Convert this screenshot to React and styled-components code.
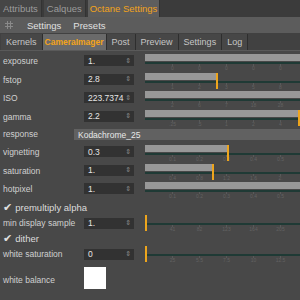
import React from 'react';
import styled, { createGlobalStyle } from 'styled-components';

const GlobalStyle = createGlobalStyle`
body {
    margin: 0;
    background: #484848;
    font-family: "Liberation Sans", Arial, sans-serif;
}
`;

const Frame = styled.div`
width: 300px;
height: 300px;
overflow: hidden;
background: #484848;
color: #d2d2d2;
font-size: 9px;
`;

const TopTabs = styled.div`
display: flex;
height: 17px;
background: #3b3b3b;
`;

const TopTab = styled.div`
display: flex;
align-items: center;
padding: 0 ${p => (p.active ? '2px' : '3px')};
margin-right: 2px;
background: ${p => (p.active ? '#5e5e5e' : '#464646')};
color: ${p => (p.active ? '#f2a31c' : '#9c9c9c')};
font-size: 9.5px;
border-right: 1px solid #333;
`;

const Toolbar = styled.div`
display: flex;
align-items: center;
gap: 12px;
height: 16px;
padding-left: 5px;
background: #5c5c5c;
color: #e0e0e0;
font-size: 9.5px;
`;

const GridIcon = styled.svg`
width: 8px;
height: 8px;
margin-right: 2px;
`;

const SubTabs = styled.div`
display: flex;
height: 17px;
padding-left: 1px;
background: #414141;
border-bottom: 1px solid #5a5a5a;
`;

const SubTab = styled.div`
display: flex;
align-items: center;
padding: 0 ${p => (p.active ? '2px' : '5px')};
margin-top: 1px;
border-right: 1px solid #2e2e2e;
background: ${p => (p.active ? '#6a6a6a' : '#474747')};
color: ${p => (p.active ? '#f4a41a' : '#c6c6c6')};
font-size: ${p => (p.active ? '8.5px' : '9px')};
font-weight: ${p => (p.active ? 'bold' : 'normal')};
`;

const Panel = styled.div`
display: flex;
flex-direction: column;
padding-top: 3px;
`;

const ParamRow = styled.div`
display: flex;
align-items: flex-start;
height: ${p => p.h || 18.5}px;
padding-left: 3px;
`;

const Label = styled.div`
flex: 0 0 81px;
width: 81px;
padding-top: ${p => p.top ?? 2}px;
white-space: nowrap;
color: #d0d0d0;
font-size: 8.5px;
`;

const NumBox = styled.div`
flex: 0 0 50px;
width: 50px;
box-sizing: border-box;
display: flex;
align-items: center;
justify-content: space-between;
height: 11px;
margin-top: ${p => p.top ?? 1}px;
padding: 0 3px 0 4px;
background: #323232;
color: #e6e6e6;
font-size: 8.5px;
`;

const Spin = styled.span`
color: #8a8a8a;
font-size: 7px;
font-family: "DejaVu Sans", sans-serif;
`;

const SliderWrap = styled.div`
position: relative;
flex: 1;
min-width: 0;
height: 18px;
margin-left: 11px;
margin-top: ${p => p.top ?? 0}px;
`;

const Fill = styled.div`
height: 7px;
background: ${p => (p.empty ? 'transparent' : '#989898')};
`;

const Line = styled.div`
height: 2px;
margin-top: 1px;
margin-left: ${p => (p.indent ? '2px' : '0')};
background: #1f3a35;
`;

const Ticks = styled.div`
display: flex;
padding-left: 14px;
`;

const Tick = styled.div`
width: 27px;
display: flex;
flex-direction: column;
align-items: center;
color: #626262;
font-size: 5px;
line-height: 5px;
&::before {
    content: '';
    width: 1px;
    height: 2px;
    background: #5a5a5a;
}
`;

const Marker = styled.div`
position: absolute;
top: 0;
width: 2px;
height: 16px;
background: #eda51d;
`;

const Dropdown = styled.div`
flex: 1;
margin-left: -10px;
height: 11px;
margin-top: 1px;
display: flex;
align-items: center;
padding-left: 4px;
background: #616161;
color: #e8e8e8;
font-size: 8.5px;
`;

const CheckRow = styled.div`
display: flex;
align-items: center;
gap: 3px;
height: ${p => p.h || 13}px;
padding-left: 3px;
font-size: 9.5px;
color: #dcdcdc;
`;

const Check = styled.span`
font-family: "DejaVu Sans", sans-serif;
font-size: 11px;
line-height: 11px;
color: #e0e0e0;
`;

const Swatch = styled.div`
width: 22px;
height: 22px;
margin-top: 4px;
background: #ffffff;
`;

function Slider({ fill, marker, labels, empty, top }) {
  const pct = Math.min(fill, 1) * 100;
  return (
    <SliderWrap top={top}>
      <Fill empty={empty} style={{ width: pct + '%' }} />
      <Line indent={empty} />
      <Ticks>
        {labels.map((l, i) => <Tick key={i}>{l}</Tick>)}
      </Ticks>
      {marker && <Marker style={{ left: `calc(${pct}% - ${pct >= 100 ? 2 : 0}px)` }} />}
    </SliderWrap>
  );
}

function Param({ label, value, fill, marker, labels }) {
  return (
    <ParamRow>
      <Label>{label}</Label>
      <NumBox>{value}<Spin>⇕</Spin></NumBox>
      <Slider fill={fill} marker={marker} labels={labels} />
    </ParamRow>
  );
}

const params = [
  { label: 'exposure', value: '1.', fill: 1, labels: ['0', '0', '0', '0', '0'] },
  { label: 'fstop', value: '2.8', fill: 0.46, marker: true, labels: ['1', '2', '3', '5', '8'] },
  { label: 'ISO', value: '223.7374', fill: 1, labels: ['2', '6', '7', '18', '28'] },
  { label: 'gamma', value: '2.2', fill: 1, marker: true, labels: ['.25', '.5', '1', '2', '4'] },
];

const params2 = [
  { label: 'vignetting', value: '0.3', fill: 0.53, marker: true, labels: ['0.1', '0.2', '0.3', '0.4', '0.5'] },
  { label: 'saturation', value: '1.', fill: 0.43, marker: true, labels: ['0.4', '0.8', '1.2', '1.6', '2.'] },
  { label: 'hotpixel', value: '1.', fill: 1, labels: ['0.1', '0.2', '0.3', '0.4', '0.5'] },
];

export default function App() {
  return (
    <Frame>
      <GlobalStyle />
      <TopTabs>
        <TopTab>Attributs</TopTab>
        <TopTab>Calques</TopTab>
        <TopTab active>Octane Settings</TopTab>
      </TopTabs>
      <Toolbar>
        <GridIcon viewBox="0 0 8 8">
          <path d="M0 2.5h8M0 5.5h8M2.5 0v8M5.5 0v8" stroke="#8a8a8a" strokeWidth="1" />
        </GridIcon>
        <span>Settings</span>
        <span>Presets</span>
      </Toolbar>
      <SubTabs>
        <SubTab>Kernels</SubTab>
        <SubTab active>CameraImager</SubTab>
        <SubTab>Post</SubTab>
        <SubTab>Preview</SubTab>
        <SubTab>Settings</SubTab>
        <SubTab>Log</SubTab>
      </SubTabs>
      <Panel>
        {params.map(p => <Param key={p.label} {...p} />)}
        <ParamRow h={17}>
          <Label top={1}>response</Label>
          <Dropdown>Kodachrome_25</Dropdown>
        </ParamRow>
        {params2.map(p => <Param key={p.label} {...p} />)}
        <CheckRow><Check>✔</Check>premultiply alpha</CheckRow>
        <ParamRow h={18}>
          <Label top={4}>min display sample</Label>
          <NumBox top={4}>1.<Spin>⇕</Spin></NumBox>
          <Slider fill={0} marker empty top={1} labels={['41', '82', '123', '164', '205']} />
        </ParamRow>
        <CheckRow><Check>✔</Check>dither</CheckRow>
        <ParamRow h={18}>
          <Label top={4}>white saturation</Label>
          <NumBox top={4}>0<Spin>⇕</Spin></NumBox>
          <Slider fill={0} marker empty top={1} labels={['25', '5.5', '7.5', '10', '12.5']} />
        </ParamRow>
        <ParamRow h={30}>
          <Label top={12}>white balance</Label>
          <Swatch />
        </ParamRow>
      </Panel>
    </Frame>
  );
}
